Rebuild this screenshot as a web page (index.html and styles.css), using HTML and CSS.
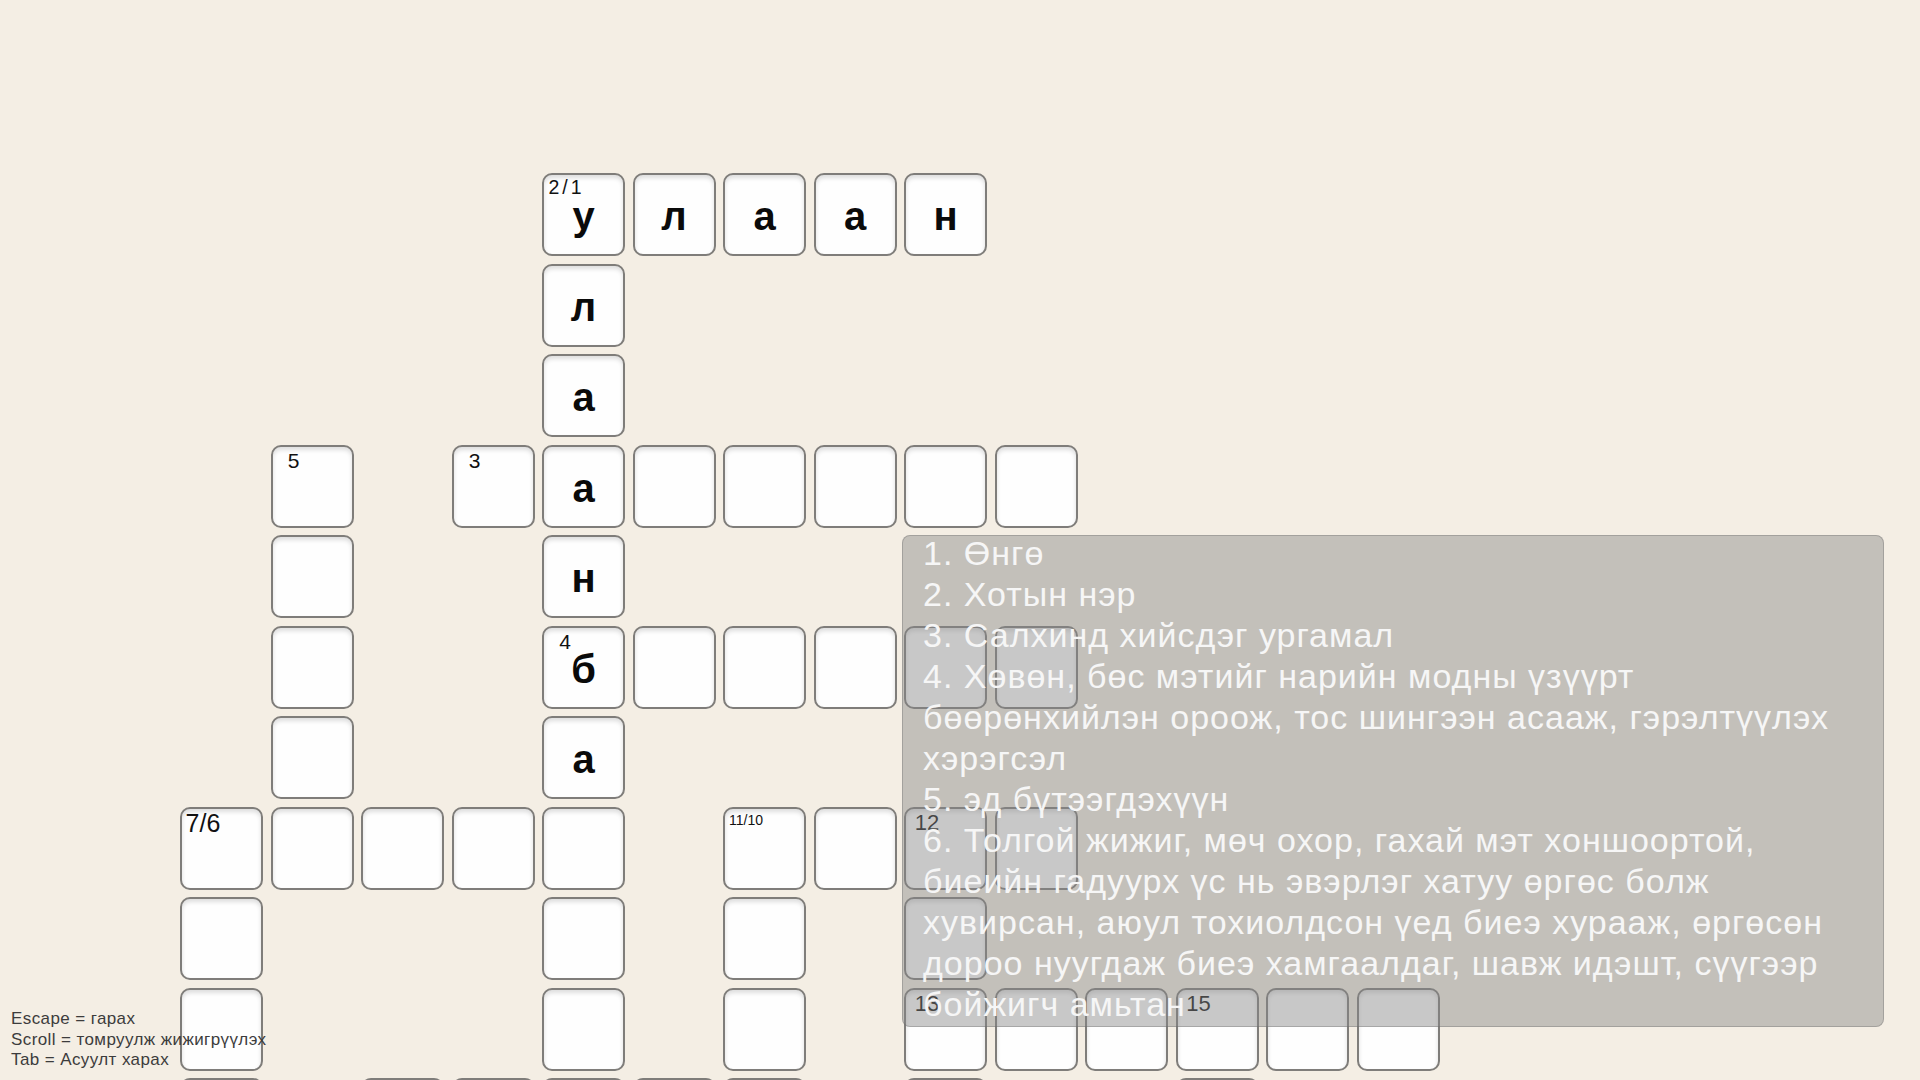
FILE: index.html
```html
<!DOCTYPE html>
<html lang="mn">
<head>
<meta charset="utf-8">
<title>Crossword</title>
<link rel="stylesheet" href="styles.css">
</head>
<body>
<div class="board">
  <div class="cell r0 c4"><span class="num n-21s">2/1</span>у</div>
  <div class="cell r0 c5">л</div>
  <div class="cell r0 c6">а</div>
  <div class="cell r0 c7">а</div>
  <div class="cell r0 c8">н</div>

  <div class="cell r1 c4">л</div>
  <div class="cell r2 c4">а</div>

  <div class="cell r3 c1"><span class="num n-21">5</span></div>
  <div class="cell r3 c3"><span class="num n-21">3</span></div>
  <div class="cell r3 c4">а</div>
  <div class="cell r3 c5"></div>
  <div class="cell r3 c6"></div>
  <div class="cell r3 c7"></div>
  <div class="cell r3 c8"></div>
  <div class="cell r3 c9"></div>

  <div class="cell r4 c1"></div>
  <div class="cell r4 c4">н</div>

  <div class="cell r5 c1"></div>
  <div class="cell r5 c4"><span class="num n-21">4</span>б</div>
  <div class="cell r5 c5"></div>
  <div class="cell r5 c6"></div>
  <div class="cell r5 c7"></div>
  <div class="cell r5 c8"></div>
  <div class="cell r5 c9"></div>

  <div class="cell r6 c1"></div>
  <div class="cell r6 c4">а</div>

  <div class="cell r7 c0"><span class="num n-25">7/6</span></div>
  <div class="cell r7 c1"></div>
  <div class="cell r7 c2"></div>
  <div class="cell r7 c3"></div>
  <div class="cell r7 c4"></div>
  <div class="cell r7 c6"><span class="num n-14">11/10</span></div>
  <div class="cell r7 c7"></div>
  <div class="cell r7 c8"><span class="num n-22">12</span></div>
  <div class="cell r7 c9"></div>

  <div class="cell r8 c0"></div>
  <div class="cell r8 c4"></div>
  <div class="cell r8 c6"></div>
  <div class="cell r8 c8"></div>

  <div class="cell r9 c0"></div>
  <div class="cell r9 c4"></div>
  <div class="cell r9 c6"></div>
  <div class="cell r9 c8"><span class="num n-22">13</span></div>
  <div class="cell r9 c9"></div>
  <div class="cell r9 c10"></div>
  <div class="cell r9 c11"><span class="num n-22">15</span></div>
  <div class="cell r9 c12"></div>
  <div class="cell r9 c13"></div>

  <div class="cell r10 c0"></div>
  <div class="cell r10 c2"></div>
  <div class="cell r10 c3"></div>
  <div class="cell r10 c4"></div>
  <div class="cell r10 c5"></div>
  <div class="cell r10 c6"></div>
  <div class="cell r10 c8"></div>
  <div class="cell r10 c11"></div>
</div>

<div class="clues">
  <div class="clue-list">
    <div>1. Өнгө</div>
    <div>2. Хотын нэр</div>
    <div>3. Салхинд хийсдэг ургамал</div>
    <div>4. Хөвөн, бөс мэтийг нарийн модны үзүүрт бөөрөнхийлэн ороож, тос шингээн асааж, гэрэлтүүлэх хэрэгсэл</div>
    <div>5. эд бүтээгдэхүүн</div>
    <div>6. Толгой жижиг, мөч охор, гахай мэт хоншоортой, биеийн гадуурх үс нь эвэрлэг хатуу өргөс болж хувирсан, аюул тохиолдсон үед биеэ хурааж, өргөсөн дороо нуугдаж биеэ хамгаалдаг, шавж идэшт, сүүгээр бойжигч амьтан</div>
  </div>
</div>

<div class="help">
  <div>Escape = гарах</div>
  <div>Scroll = томруулж жижигрүүлэх</div>
  <div>Tab = Асуулт харах</div>
</div>
</body>
</html>
```
FILE: styles.css
```css
html, body {
  margin: 0;
  padding: 0;
  height: 100%;
  overflow: hidden;
}

body {
  background: #f4eee4;
  font-family: "Liberation Sans", Arial, sans-serif;
  position: relative;
}

.board {
  display: grid;
  grid-template-columns: repeat(14, 83px);
  grid-template-rows: repeat(11, 83px);
  gap: 7.5px;
  padding: 173px 0 0 180px;
}

.cell {
  position: relative;
  box-sizing: border-box;
  width: 83px;
  height: 83px;
  display: flex;
  align-items: center;
  justify-content: center;
  padding-top: 4px;
  background: #fefefe;
  border: 2px solid #7f7d7a;
  border-radius: 10px;
  box-shadow: inset 0 3px 4px rgba(0, 0, 0, 0.13);
  font-weight: bold;
  font-size: 40px;
  color: #0a0a0a;
}

.num {
  position: absolute;
  left: 0;
  top: 3px;
  width: 42px;
  text-align: center;
  line-height: 1;
  font-weight: normal;
  color: #111;
}
.n-14 { font-size: 14px; top: 4px; }
.n-21 { font-size: 21px; top: 3px; }
.n-21s { font-size: 19.5px; top: 3px; letter-spacing: 3px; text-indent: 3px; }
.n-22 { font-size: 22px; top: 3px; }
.n-25 { font-size: 25px; top: 2px; }

.r0 { grid-row: 1; }
.r1 { grid-row: 2; }
.r2 { grid-row: 3; }
.r3 { grid-row: 4; }
.r4 { grid-row: 5; }
.r5 { grid-row: 6; }
.r6 { grid-row: 7; }
.r7 { grid-row: 8; }
.r8 { grid-row: 9; }
.r9 { grid-row: 10; }
.r10 { grid-row: 11; }

.c0 { grid-column: 1; }
.c1 { grid-column: 2; }
.c2 { grid-column: 3; }
.c3 { grid-column: 4; }
.c4 { grid-column: 5; }
.c5 { grid-column: 6; }
.c6 { grid-column: 7; }
.c7 { grid-column: 8; }
.c8 { grid-column: 9; }
.c9 { grid-column: 10; }
.c10 { grid-column: 11; }
.c11 { grid-column: 12; }
.c12 { grid-column: 13; }
.c13 { grid-column: 14; }

.clues {
  position: absolute;
  left: 902px;
  top: 535px;
  width: 982px;
  height: 492px;
  box-sizing: border-box;
  padding: 0 20px 0 20px;
  background: rgba(136, 136, 136, 0.45);
  border: 1px solid rgba(90, 90, 90, 0.3);
  border-radius: 8px;
  color: #f6f6f6;
  font-size: 34px;
  line-height: 41px;
  letter-spacing: 1px;
}

.clue-list {
  margin-top: -3px;
}

.help {
  position: absolute;
  left: 11px;
  top: 1009px;
  font-size: 17px;
  line-height: 20.5px;
  letter-spacing: 0.4px;
  color: #3c3c3c;
}
```
